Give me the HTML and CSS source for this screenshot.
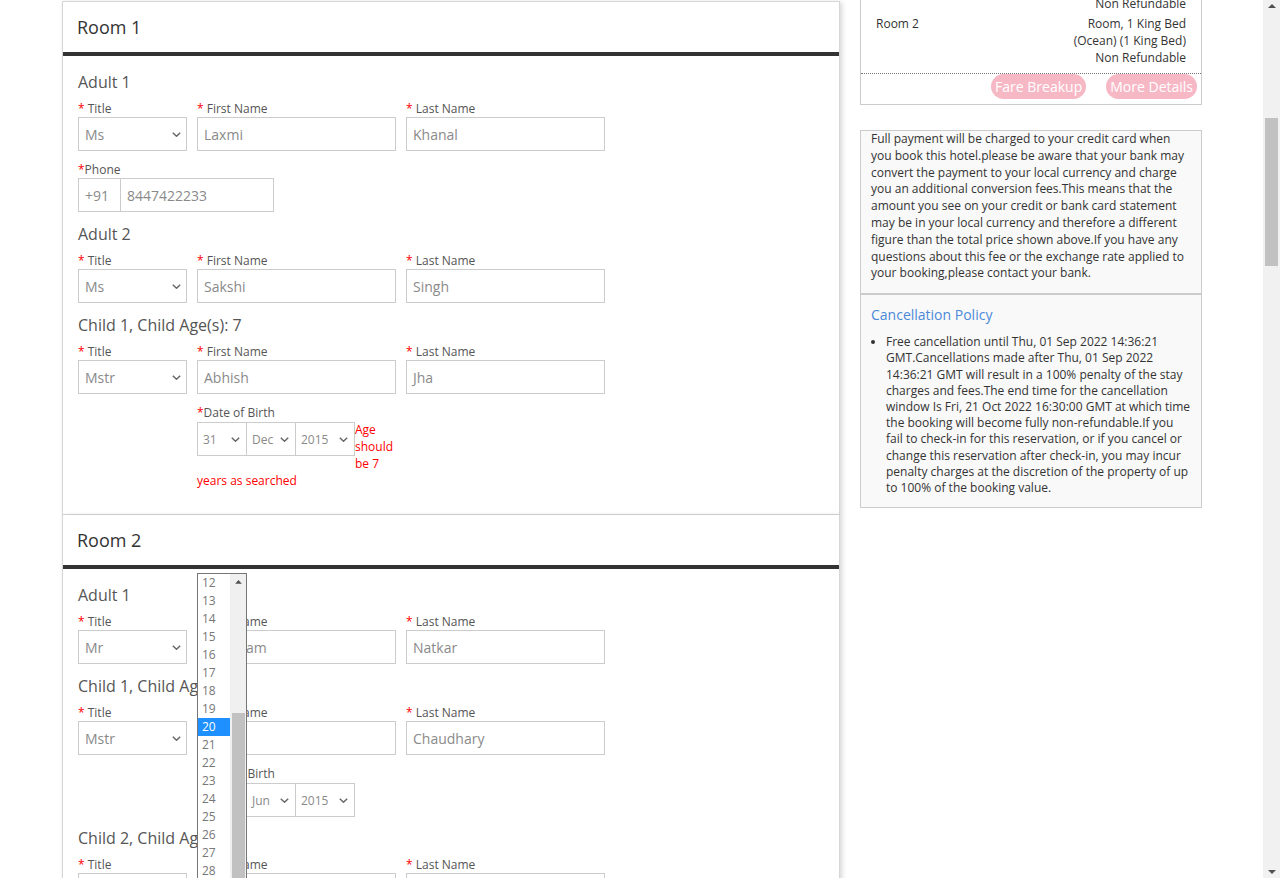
FILE: index.html
```html
<!DOCTYPE html>
<html lang="en">
<head>
<meta charset="utf-8">
<title>Guest details</title>
<link rel="stylesheet" href="styles.css">
</head>
<body>
<div class="page">
  <div class="layout">
    <main class="main">
      <section class="room">
        <header class="room-head">Room 1</header>
        <div class="room-body">
          <h3 class="pax">Adult 1</h3>
          <div class="row">
            <div class="field f-title"><label><span class="req">*</span> Title</label><div class="select"><span>Ms</span><svg class="chev" width="9" height="5" viewBox="0 0 9 5"><polyline points="0.8,0.8 4.5,4.2 8.2,0.8"/></svg></div></div>
            <div class="field f-name"><label><span class="req">*</span> First Name</label><div class="input">Laxmi</div></div>
            <div class="field f-name"><label><span class="req">*</span> Last Name</label><div class="input">Khanal</div></div>
          </div>
          <div class="phone-block">
            <label class="lbl"><span class="req">*</span>Phone</label>
            <div class="phone"><div class="input cc">+91</div><div class="input num">8447422233</div></div>
          </div>
          <h3 class="pax">Adult 2</h3>
          <div class="row">
            <div class="field f-title"><label><span class="req">*</span> Title</label><div class="select"><span>Ms</span><svg class="chev" width="9" height="5" viewBox="0 0 9 5"><polyline points="0.8,0.8 4.5,4.2 8.2,0.8"/></svg></div></div>
            <div class="field f-name"><label><span class="req">*</span> First Name</label><div class="input">Sakshi</div></div>
            <div class="field f-name"><label><span class="req">*</span> Last Name</label><div class="input">Singh</div></div>
          </div>
          <h3 class="pax">Child 1, Child Age(s): 7</h3>
          <div class="row">
            <div class="field f-title"><label><span class="req">*</span> Title</label><div class="select"><span>Mstr</span><svg class="chev" width="9" height="5" viewBox="0 0 9 5"><polyline points="0.8,0.8 4.5,4.2 8.2,0.8"/></svg></div></div>
            <div class="field f-name"><label><span class="req">*</span> First Name</label><div class="input">Abhish</div></div>
            <div class="field f-name"><label><span class="req">*</span> Last Name</label><div class="input">Jha</div></div>
          </div>
          <div class="dob">
            <label class="lbl"><span class="req">*</span>Date of Birth</label>
            <div class="dob-sels">
              <div class="select sm w-d"><span>31</span><svg class="chev" width="9" height="5" viewBox="0 0 9 5"><polyline points="0.8,0.8 4.5,4.2 8.2,0.8"/></svg></div>
              <div class="select sm w-m"><span>Dec</span><svg class="chev" width="9" height="5" viewBox="0 0 9 5"><polyline points="0.8,0.8 4.5,4.2 8.2,0.8"/></svg></div>
              <div class="select sm w-y"><span>2015</span><svg class="chev" width="9" height="5" viewBox="0 0 9 5"><polyline points="0.8,0.8 4.5,4.2 8.2,0.8"/></svg></div>
            </div>
            <span class="err">Age should be 7 years as searched</span>
          </div>
        </div>
      </section>

      <section class="room">
        <header class="room-head">Room 2</header>
        <div class="room-body">
          <h3 class="pax">Adult 1</h3>
          <div class="row">
            <div class="field f-title"><label><span class="req">*</span> Title</label><div class="select"><span>Mr</span><svg class="chev" width="9" height="5" viewBox="0 0 9 5"><polyline points="0.8,0.8 4.5,4.2 8.2,0.8"/></svg></div></div>
            <div class="field f-name"><label><span class="req">*</span> First Name</label><div class="input">Shubham</div></div>
            <div class="field f-name"><label><span class="req">*</span> Last Name</label><div class="input">Natkar</div></div>
          </div>
          <h3 class="pax">Child 1, Child Age(s): 7</h3>
          <div class="row">
            <div class="field f-title"><label><span class="req">*</span> Title</label><div class="select"><span>Mstr</span><svg class="chev" width="9" height="5" viewBox="0 0 9 5"><polyline points="0.8,0.8 4.5,4.2 8.2,0.8"/></svg></div></div>
            <div class="field f-name"><label><span class="req">*</span> First Name</label><div class="input">Riya</div></div>
            <div class="field f-name"><label><span class="req">*</span> Last Name</label><div class="input">Chaudhary</div></div>
          </div>
          <div class="dob">
            <label class="lbl"><span class="req">*</span>Date of Birth</label>
            <div class="dob-sels">
              <div class="select sm w-d"><span>20</span><svg class="chev" width="9" height="5" viewBox="0 0 9 5"><polyline points="0.8,0.8 4.5,4.2 8.2,0.8"/></svg></div>
              <div class="select sm w-m"><span>Jun</span><svg class="chev" width="9" height="5" viewBox="0 0 9 5"><polyline points="0.8,0.8 4.5,4.2 8.2,0.8"/></svg></div>
              <div class="select sm w-y"><span>2015</span><svg class="chev" width="9" height="5" viewBox="0 0 9 5"><polyline points="0.8,0.8 4.5,4.2 8.2,0.8"/></svg></div>
            </div>
          </div>
          <h3 class="pax">Child 2, Child Age(s): 5</h3>
          <div class="row">
            <div class="field f-title"><label><span class="req">*</span> Title</label><div class="select"><span>Miss</span><svg class="chev" width="9" height="5" viewBox="0 0 9 5"><polyline points="0.8,0.8 4.5,4.2 8.2,0.8"/></svg></div></div>
            <div class="field f-name"><label><span class="req">*</span> First Name</label><div class="input">Anu</div></div>
            <div class="field f-name"><label><span class="req">*</span> Last Name</label><div class="input">Chaudhary</div></div>
          </div>
        </div>
      </section>
    </main>

    <aside class="side">
      <div class="fare-box">
        <div class="fare-row">
          <div>Room 1</div>
          <div class="fare-right"><div>Room, 1 King Bed (Ocean) (1 King Bed)</div><div>Non Refundable</div></div>
        </div>
        <div class="fare-row">
          <div>Room 2</div>
          <div class="fare-right"><div>Room, 1 King Bed (Ocean) (1 King Bed)</div><div>Non Refundable</div></div>
        </div>
        <div class="fare-actions">
          <span class="pill">Fare Breakup</span>
          <span class="pill">More Details</span>
        </div>
      </div>
      <div class="note">Full payment will be charged to your credit card when you book this hotel.please be aware that your bank may convert the payment to your local currency and charge you an additional conversion fees.This means that the amount you see on your credit or bank card statement may be in your local currency and therefore a different figure than the total price shown above.If you have any questions about this fee or the exchange rate applied to your booking,please contact your bank.</div>
      <div class="policy">
        <div class="policy-title">Cancellation Policy</div>
        <ul>
          <li>Free cancellation until Thu, 01 Sep 2022 14:36:21 GMT.Cancellations made after Thu, 01 Sep 2022 14:36:21 GMT will result in a 100% penalty of the stay charges and fees.The end time for the cancellation window Is Fri, 21 Oct 2022 16:30:00 GMT at which time the booking will become fully non-refundable.If you fail to check-in for this reservation, or if you cancel or change this reservation after check-in, you may incur penalty charges at the discretion of the property of up to 100% of the booking value.</li>
        </ul>
      </div>
    </aside>
  </div>

  <div class="dd">
    <div class="dd-list">
      <div class="dd-item">12</div>
      <div class="dd-item">13</div>
      <div class="dd-item">14</div>
      <div class="dd-item">15</div>
      <div class="dd-item">16</div>
      <div class="dd-item">17</div>
      <div class="dd-item">18</div>
      <div class="dd-item">19</div>
      <div class="dd-item active">20</div>
      <div class="dd-item">21</div>
      <div class="dd-item">22</div>
      <div class="dd-item">23</div>
      <div class="dd-item">24</div>
      <div class="dd-item">25</div>
      <div class="dd-item">26</div>
      <div class="dd-item">27</div>
      <div class="dd-item">28</div>
      <div class="dd-item">29</div>
    </div>
    <div class="dd-bar">
      <svg class="dd-arrow" width="7" height="4" viewBox="0 0 7 4"><polygon points="0,4 3.5,0 7,4"/></svg>
      <div class="dd-thumb"></div>
    </div>
  </div>
</div>

<div class="scrollbar">
  <svg class="sb-arrow" width="8" height="4" viewBox="0 0 8 4"><polygon points="0,4 4,0 8,4"/></svg>
  <div class="sb-thumb"></div>
  <svg class="sb-arrow sb-down" width="8" height="4" viewBox="0 0 8 4"><polygon points="0,0 4,4 8,0"/></svg>
</div>
</body>
</html>
```

FILE: styles.css
```css
html, body {
  margin: 0;
  height: 100%;
  overflow: hidden;
}

body {
  display: flex;
  background: #fff;
  font-family: "Open Sans", "Noto Sans", sans-serif;
  color: #333;
}

.page {
  flex: 1;
  position: relative;
  overflow: hidden;
}

.layout {
  display: flex;
  align-items: flex-start;
  gap: 20px;
  padding-left: 62px;
}

/* ---------- left column ---------- */
.main {
  width: 778px;
  margin-top: 1px;
  flex: none;
}

.room {
  box-sizing: border-box;
  background: #fff;
  border: 1px solid #d6d6d6;
  box-shadow: 2px 1px 5px rgba(0, 0, 0, 0.16);
}

.room + .room {
  border-top: none;
}

.room-head {
  height: 50px;
  display: flex;
  align-items: center;
  padding-left: 14px;
  font-size: 18px;
  color: #333;
  border-bottom: 4px solid #333;
}

.room-body {
  padding: 15px 15px 25px 15px;
}

.pax {
  margin: 0 0 7px;
  font-size: 16px;
  line-height: 22px;
  font-weight: 400;
  color: #555;
}

.row + .pax,
.phone-block + .pax {
  margin-top: 11px;
}

.dob + .pax {
  margin-top: 9px;
}

.row {
  display: flex;
  gap: 10px;
}

.field label,
.lbl {
  display: block;
  font-size: 12px;
  line-height: 17px;
  color: #555;
}

.req {
  color: #f00;
}

.input,
.select {
  box-sizing: border-box;
  height: 34px;
  border: 1px solid #ccc;
  font-size: 14px;
  color: #8a8a8a;
  padding: 0 6px;
  display: flex;
  align-items: center;
  background: #fff;
}

.select {
  justify-content: space-between;
  padding-right: 5px;
}

.chev {
  fill: none;
  stroke: #666;
  stroke-width: 1.5;
  flex: none;
}

.f-title {
  width: 109px;
}

.f-name {
  width: 199px;
}

.phone-block {
  margin-top: 10px;
}

.phone {
  display: flex;
  width: 196px;
}

.cc {
  width: 42px;
  border-right: none;
}

.num {
  width: 154px;
}

.dob {
  margin-top: 10px;
  margin-left: 119px;
  width: 209px;
  display: flow-root;
  font-size: 12px;
  line-height: 17px;
}

.dob-sels {
  float: left;
  display: flex;
  margin-top: 1px;
  margin-bottom: 1px;
}

.select.sm {
  font-size: 12px;
  padding: 0 6px 0 5px;
}

.w-d { width: 50px; }
.w-m { width: 50px; margin-left: -1px; }
.w-y { width: 60px; margin-left: -1px; }

.err {
  color: #f00;
  font-size: 12px;
  line-height: 17px;
}

/* ---------- right column ---------- */
.side {
  width: 342px;
  flex: none;
  margin-top: -43px;
  font-size: 12px;
  color: #333;
}

.fare-box {
  border: 1px solid #ccc;
  background: #fff;
}

.fare-row {
  display: flex;
  justify-content: space-between;
  padding: 3px 15px 0;
  line-height: 17px;
}

.fare-right {
  width: 128px;
  text-align: right;
}

.fare-actions {
  margin-top: 7px;
  border-top: 1px dotted #777;
  display: flex;
  justify-content: flex-end;
  gap: 20px;
  padding: 0 4px 5px;
}

.pill {
  display: block;
  height: 25px;
  line-height: 25px;
  padding: 0 4px;
  border-radius: 13px;
  background: #f7b8c6;
  color: #fff;
  font-size: 14px;
}

.note {
  margin-top: 25px;
  border: 1px solid #ccc;
  background: #f9f9f9;
  padding: 0 10px 11px;
  line-height: 16.8px;
}

.policy {
  border: 1px solid #ccc;
  background: #f9f9f9;
  padding: 10px 10px 11px;
}

.policy-title {
  font-size: 14px;
  line-height: 19px;
  color: #4a8ad8;
}

.policy ul {
  margin: 10px 0 0;
  padding-left: 15px;
}

.policy li {
  line-height: 16.2px;
}

/* ---------- open select popup ---------- */
.dd {
  position: absolute;
  left: 197px;
  top: 573px;
  width: 50px;
  height: 330px;
  box-sizing: border-box;
  border: 1px solid #767676;
  background: #fff;
  display: flex;
}

.dd-list {
  flex: 1;
}

.dd-item {
  height: 18px;
  line-height: 18px;
  padding-left: 4px;
  font-size: 12px;
  color: #777;
}

.dd-item.active {
  background: #1e90ff;
  color: #fff;
}

.dd-bar {
  width: 16px;
  background: #f0f0f0;
  display: flex;
  flex-direction: column;
  align-items: center;
}

.dd-arrow {
  margin-top: 6px;
  fill: #505050;
}

.dd-thumb {
  margin-top: 129px;
  width: 13px;
  height: 200px;
  background: #c1c1c1;
}

/* ---------- page scrollbar ---------- */
.scrollbar {
  width: 17px;
  flex: none;
  background: #f1f1f1;
  display: flex;
  flex-direction: column;
  align-items: center;
}

.sb-arrow {
  margin-top: 4px;
  fill: #505050;
}

.sb-thumb {
  margin-top: 110px;
  width: 13px;
  height: 148px;
  background: #c1c1c1;
}

.sb-down {
  margin-top: auto;
  margin-bottom: 4px;
}
```
